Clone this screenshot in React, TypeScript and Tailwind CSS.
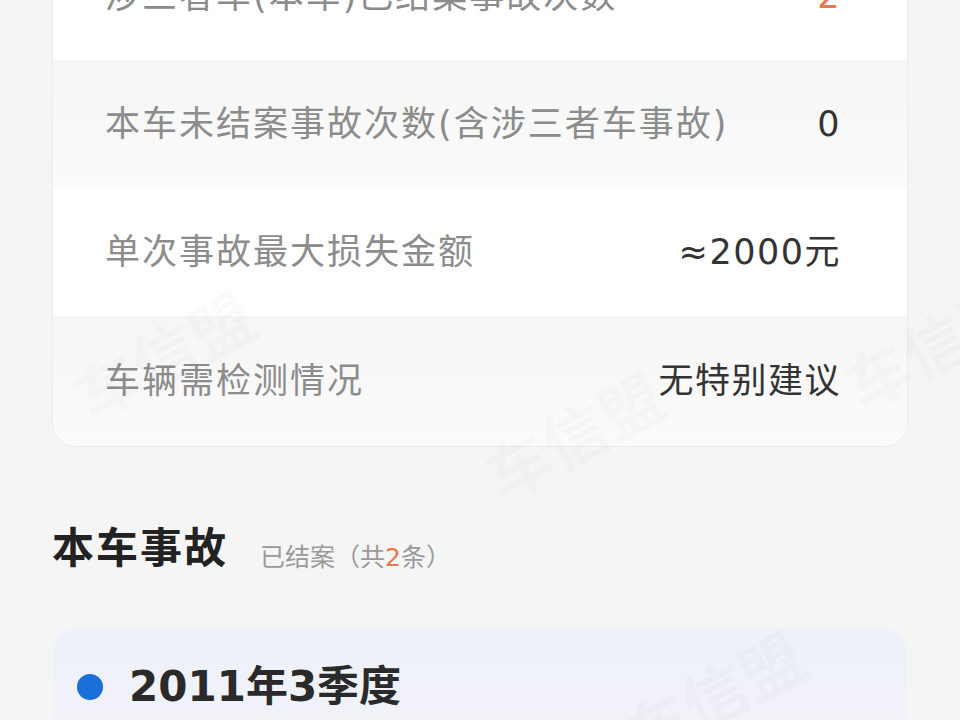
import React from 'react';

const font = { fontFamily: '"DejaVu Sans", "Noto Sans CJK SC", sans-serif' };

type Row = { label: string; value: string; accent?: boolean };

const rows: Row[] = [
  { label: '涉三者车(本车)已结案事故次数', value: '2', accent: true },
  { label: '本车未结案事故次数(含涉三者车事故)', value: '0' },
  { label: '单次事故最大损失金额', value: '≈2000元' },
  { label: '车辆需检测情况', value: '无特别建议' },
];

function Watermark({ className }: { className: string }) {
  return (
    <span
      className={`pointer-events-none absolute select-none whitespace-nowrap text-[64px] font-bold text-black/[0.02] -rotate-[28deg] ${className}`}
    >
      车信盟
    </span>
  );
}

export default function App() {
  return (
    <div className="relative h-[720px] w-[960px] overflow-hidden bg-[#f5f5f5]" style={font}>
      {/* summary card, scrolled so the first row is cut off */}
      <div className="mx-[53px] -mt-[68px] overflow-hidden rounded-b-[24px] bg-white shadow-[0_0_0_1px_#ebebeb]">
        {rows.map((r, i) => (
          <div
            key={r.label}
            className={`flex h-[128px] items-center justify-between pl-[52px] pr-[66px] ${
              i % 2 === 1 ? 'bg-gradient-to-b from-[#f6f6f6] to-[#fbfbfb]' : 'bg-white'
            } ${i === rows.length - 1 ? 'h-[130px]' : ''}`}
          >
            <span className="text-[35px] tracking-[2px] text-[#8c8c8c]">{r.label}</span>
            <span className={`text-[35px] tracking-[1.5px] ${r.accent ? 'text-[#e8774a]' : 'text-[#333]'}`}>
              {r.value}
            </span>
          </div>
        ))}
      </div>

      {/* section header */}
      <div className="mt-[82px] flex items-end gap-[32px] pl-[52px]">
        <h2 className="text-[42px] font-bold leading-none tracking-[2px] text-[#222]">本车事故</h2>
        <span className="text-[25px] leading-none text-[#9a9a9a]">
          已结案（共<span className="text-[#e8774a]">2</span>条）
        </span>
      </div>

      {/* accident card */}
      <div className="mx-[53px] mt-[58px] h-[200px] rounded-t-[24px] bg-gradient-to-b from-[#eef1f8] to-[#f3f4f9] pl-[24px] pt-[38px]">
        <div className="flex items-center gap-[26px]">
          <span className="h-[26px] w-[26px] rounded-full bg-[#1a6fd8]" />
          <span className="text-[42px] font-bold leading-none text-[#2a2a2a]">2011年3季度</span>
        </div>
      </div>

      <Watermark className="left-[70px] top-[310px]" />
      <Watermark className="left-[480px] top-[390px]" />
      <Watermark className="left-[840px] top-[300px]" />
      <Watermark className="left-[620px] top-[650px]" />
    </div>
  );
}
